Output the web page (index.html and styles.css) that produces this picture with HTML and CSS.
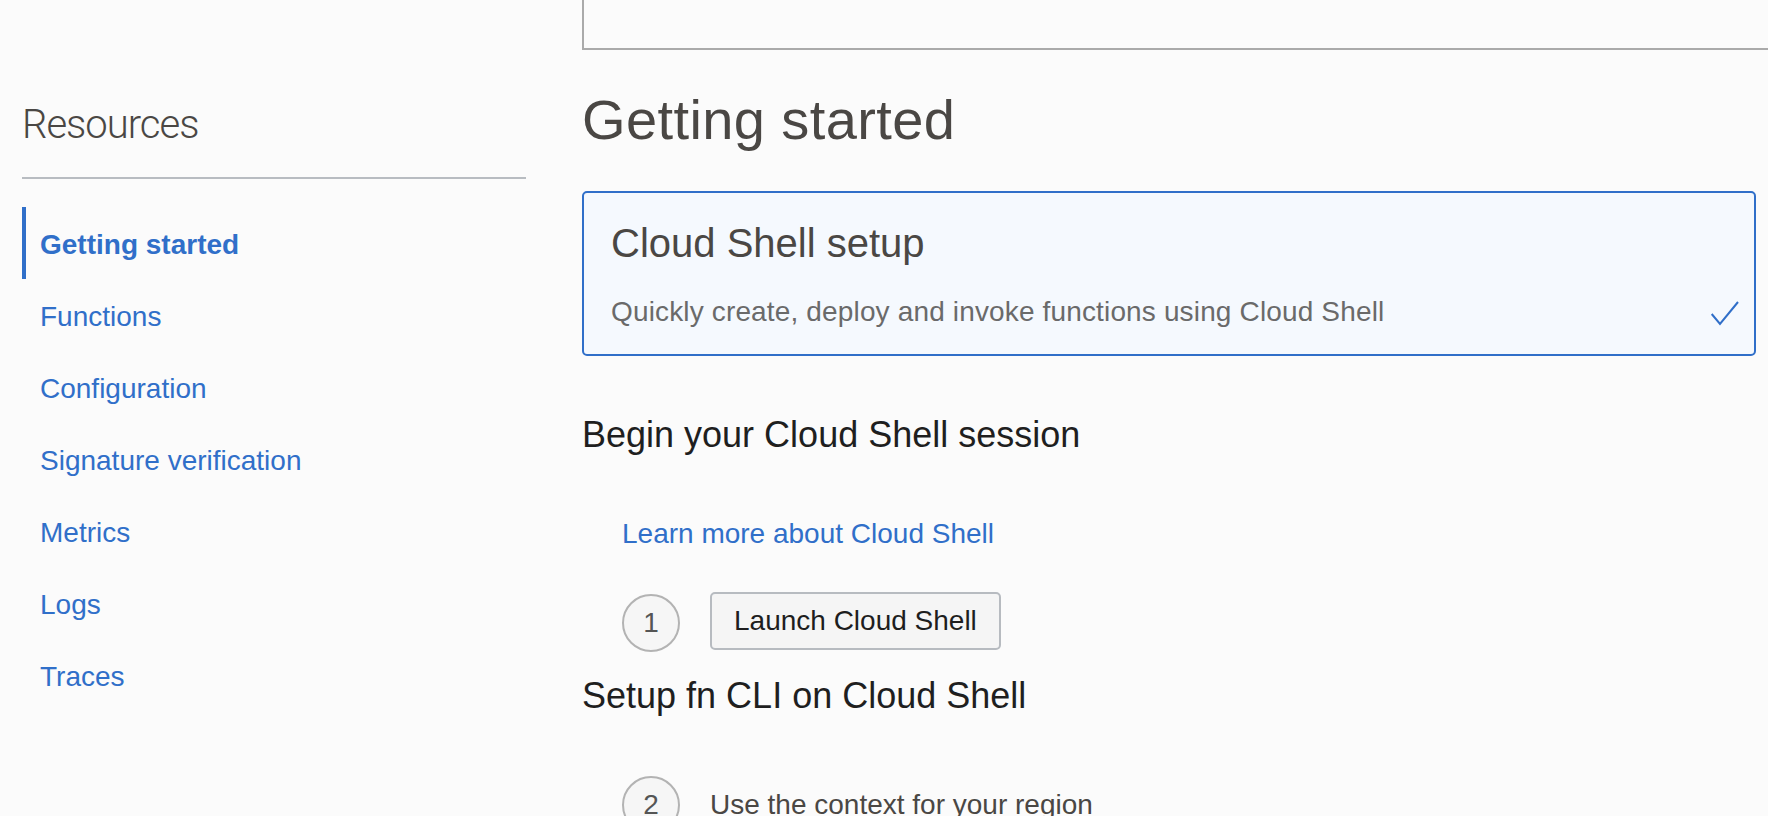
FILE: index.html
```html
<!DOCTYPE html>
<html lang="en">
<head>
<meta charset="utf-8">
<title>Getting started</title>
<link rel="stylesheet" href="styles.css">
</head>
<body>
<div class="page">
  <aside class="sidebar">
    <h2 class="res-title">Resources</h2>
    <div class="res-divider"></div>
    <nav class="res-nav">
      <a class="res-item active" href="#">Getting started</a>
      <a class="res-item" href="#">Functions</a>
      <a class="res-item" href="#">Configuration</a>
      <a class="res-item" href="#">Signature verification</a>
      <a class="res-item" href="#">Metrics</a>
      <a class="res-item" href="#">Logs</a>
      <a class="res-item" href="#">Traces</a>
    </nav>
  </aside>
  <main class="main">
    <div class="top-box"></div>
    <h1 class="page-title">Getting started</h1>
    <div class="setup-card">
      <div class="card-title">Cloud Shell setup</div>
      <div class="card-row">
        <div class="card-sub">Quickly create, deploy and invoke functions using Cloud Shell</div>
        <svg class="card-check" width="30" height="26" viewBox="0 0 30 26"><polyline points="1.7,14 10,24 28,2" fill="none" stroke="#306fc9" stroke-width="2"/></svg>
      </div>
    </div>
    <h2 class="section-title begin">Begin your Cloud Shell session</h2>
    <div class="steps">
      <a class="learn-link" href="#">Learn more about Cloud Shell</a>
      <div class="step-row first">
        <div class="step-num">1</div>
        <button class="launch-btn" type="button">Launch Cloud Shell</button>
      </div>
    </div>
    <h2 class="section-title setup">Setup fn CLI on Cloud Shell</h2>
    <div class="steps">
      <div class="step-row second">
        <div class="step-num">2</div>
        <div class="step-text">Use the context for your region</div>
      </div>
    </div>
  </main>
</div>
</body>
</html>
```

FILE: styles.css
```css
html, body {
  margin: 0;
  padding: 0;
  background: #fbfbfb;
}
body {
  height: 816px;
  overflow: hidden;
  font-family: "Liberation Sans", Arial, Helvetica, sans-serif;
}
.page {
  display: flex;
  align-items: flex-start;
}
.sidebar {
  width: 504px;
  padding: 101px 0 0 22px;
  flex-shrink: 0;
}
.res-title {
  margin: 0;
  font-family: Roboto, "Liberation Sans", sans-serif;
  font-weight: 300;
  font-size: 40px;
  line-height: 48px;
  color: #4a4744;
  letter-spacing: -1px;
}
.res-divider {
  margin-top: 28px;
  height: 2px;
  background: #b8bcc1;
}
.res-nav {
  margin-top: 28px;
  display: flex;
  flex-direction: column;
}
.res-item {
  display: block;
  height: 72px;
  box-sizing: border-box;
  padding-top: 3px;
  line-height: 69px;
  font-size: 28px;
  color: #306fc9;
  text-decoration: none;
  border-left: 4px solid transparent;
  padding-left: 14px;
}
.res-item.active {
  border-left-color: #306fc9;
  font-weight: bold;
}
.main {
  flex: 1;
  margin-left: 56px;
  padding-right: 12px;
  min-width: 0;
}
.top-box {
  height: 50px;
  box-sizing: border-box;
  border-left: 2px solid #aaaaaa;
  border-bottom: 2px solid #aaaaaa;
  margin-right: -12px;
}
.page-title {
  margin: 38px 0 0;
  font-size: 56px;
  line-height: 64px;
  font-weight: normal;
  color: #4a4744;
  letter-spacing: 0.4px;
}
.setup-card {
  margin-top: 39px;
  border: 2px solid #306fc9;
  border-radius: 5px;
  background: #f5f9fe;
  padding: 26px 14px 22px 27px;
}
.card-title {
  font-size: 40px;
  line-height: 48px;
  color: #4a4744;
}
.card-row {
  margin-top: 25px;
  display: flex;
  justify-content: space-between;
  align-items: flex-start;
}
.card-sub {
  font-size: 28px;
  line-height: 40px;
  color: #6a6a6a;
  letter-spacing: 0.15px;
}
.card-check {
  margin-top: 8px;
  flex-shrink: 0;
}
.section-title {
  margin: 0;
  font-size: 36px;
  line-height: 44px;
  font-weight: normal;
  color: #1f1f1f;
}
.section-title.begin {
  margin-top: 57px;
}
.section-title.setup {
  margin-top: 22px;
}
.steps {
  padding-left: 40px;
}
.learn-link {
  display: block;
  margin-top: 57px;
  font-size: 28px;
  line-height: 40px;
  color: #306fc9;
  text-decoration: none;
}
.step-row {
  display: flex;
  gap: 30px;
}
.step-row.first {
  margin-top: 38px;
  align-items: flex-start;
}
.step-row.first .step-num {
  margin-top: 2px;
}
.step-row.second {
  margin-top: 58px;
  align-items: center;
}
.step-num {
  width: 58px;
  height: 58px;
  box-sizing: border-box;
  border: 2px solid #b3b3b3;
  border-radius: 50%;
  background: #f6f6f6;
  display: flex;
  align-items: center;
  justify-content: center;
  font-size: 28px;
  color: #555555;
  flex-shrink: 0;
}
.launch-btn {
  height: 58px;
  box-sizing: border-box;
  padding: 0 22px;
  border: 2px solid #b7bbc0;
  border-radius: 5px;
  background: #f5f5f5;
  font-family: "Liberation Sans", Arial, Helvetica, sans-serif;
  font-size: 28px;
  color: #1e1e1e;
}
.step-text {
  font-size: 28px;
  line-height: 40px;
  color: #4a4744;
}
```
